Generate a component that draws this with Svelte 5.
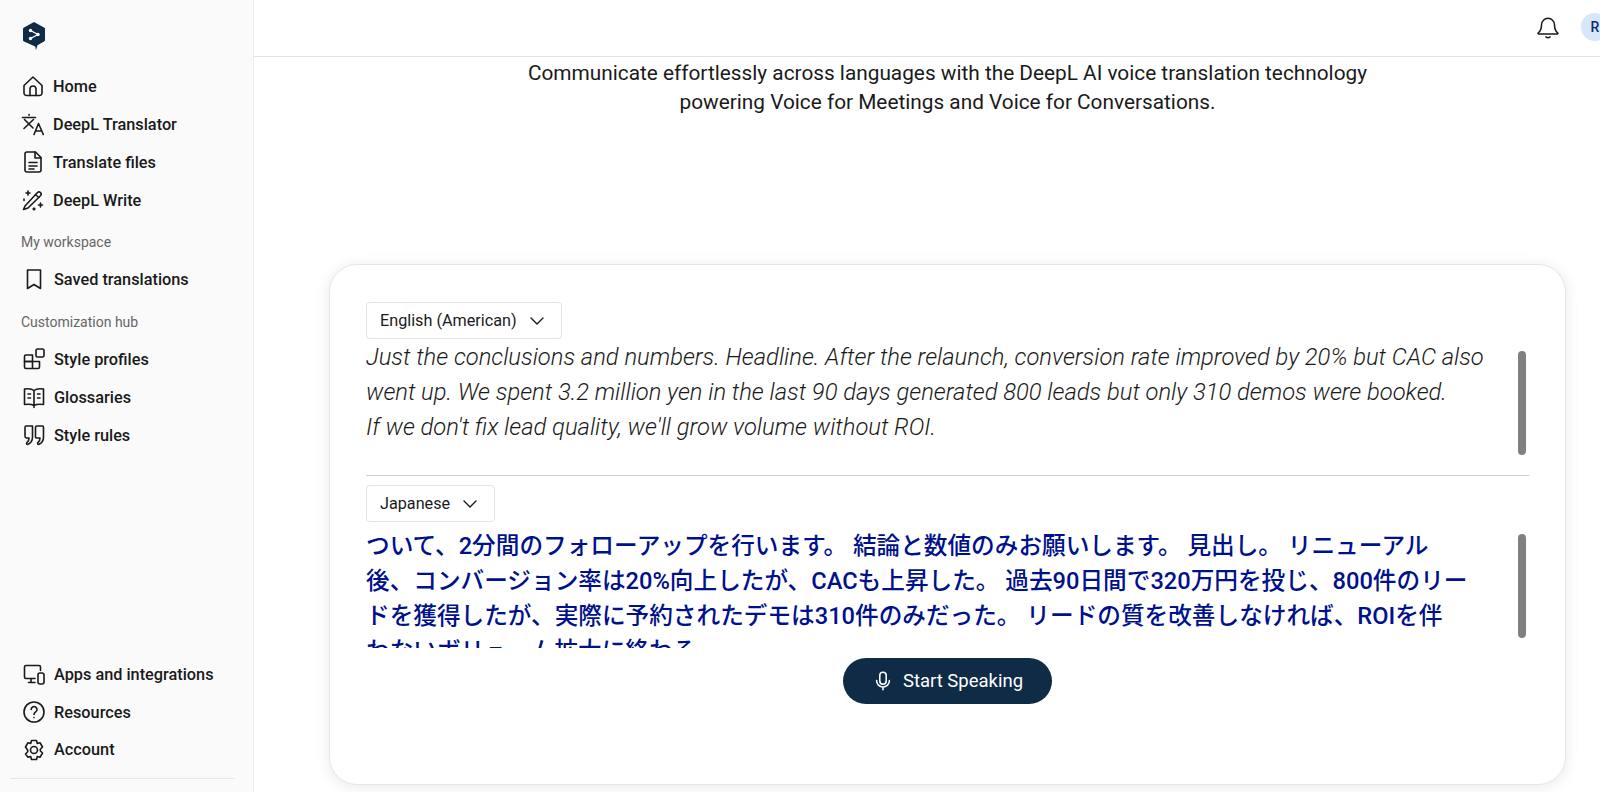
<script>
  const topNav = [
    { icon: 'home', label: 'Home' },
    { icon: 'translate', label: 'DeepL Translator' },
    { icon: 'file', label: 'Translate files' },
    { icon: 'wand', label: 'DeepL Write' }
  ];
  const hubNav = [
    { icon: 'profiles', label: 'Style profiles' },
    { icon: 'book', label: 'Glossaries' },
    { icon: 'quote', label: 'Style rules' }
  ];
  const bottomNav = [
    { icon: 'devices', label: 'Apps and integrations' },
    { icon: 'help', label: 'Resources' },
    { icon: 'gear', label: 'Account' }
  ];

  const sourceLines = [
    'Just the conclusions and numbers. Headline. After the relaunch, conversion rate improved by 20% but CAC also',
    'went up. We spent 3.2 million yen in the last 90 days generated 800 leads but only 310 demos were booked.',
    "If we don't fix lead quality, we'll grow volume without ROI."
  ];
  const targetLines = [
    'ついて、2分間のフォローアップを行います。 結論と数値のみお願いします。 見出し。 リニューアル',
    '後、コンバージョン率は20%向上したが、CACも上昇した。 過去90日間で320万円を投じ、800件のリー',
    'ドを獲得したが、実際に予約されたデモは310件のみだった。 リードの質を改善しなければ、ROIを伴',
    'わないボリューム拡大に終わる。'
  ];
</script>

{#snippet icon(name)}
  <svg class="icon" viewBox="0 0 24 24" fill="none" stroke="currentColor" stroke-width="1.6" stroke-linecap="round" stroke-linejoin="round">
    {#if name === 'home'}
      <path d="M3 11.500 12 3l9 8.500V19a2.500 2.500 0 0 1-2.500 2.500h-13A2.500 2.500 0 0 1 3 19z" />
      <path d="M9 21.500V15a3 3 0 0 1 6 0v6.500" />
    {:else if name === 'translate'}
      <path d="M1.500 5.500h13M8 2.500v.8M3.500 7.500 12 16M12.500 7.500 3 16.500" />
      <path d="m13 22.500 4.500-11 4.800 11M14.500 19h6" />
    {:else if name === 'file'}
      <path d="M6 2h8.500L20 7.500V20a2 2 0 0 1-2 2H6a2 2 0 0 1-2-2V4a2 2 0 0 1 2-2z" />
      <path d="M14 2v6h6M8 12.500h8M8 16h8M8 19h5" />
    {:else if name === 'wand'}
      <path d="M2.500 21.500 4 18 16.500 4.500a2.200 2.200 0 0 1 3.200 3L7 20z" />
      <path d="m14.500 6.500 3.200 3M7 3v4M5 5h4M19.500 15v4M17.500 17h4M13 20v2M12 21h2M3 11v1.500" />
    {:else if name === 'bookmark'}
      <path d="M5.500 3h13v18.500L12 17.500l-6.500 4z" />
    {:else if name === 'profiles'}
      <path d="M2.500 9.500A1.500 1.500 0 0 1 4 8h6.500v6.500h-8z" />
      <path d="M2.500 14.500h8v7H4A1.500 1.500 0 0 1 2.500 20zM10.500 14.500h7V20a1.500 1.500 0 0 1-1.500 1.500h-5.500z" />
      <rect x="14" y="2" width="8" height="8" rx="1.500" />
    {:else if name === 'book'}
      <path d="M12 5.500C10 3.800 6 3.500 2.500 4v15.500c3.500-.4 7.500-.2 9.500 1 2-1.200 6-1.400 9.500-1V4C18 3.500 14 3.800 12 5.500zM12 5.500v17" />
      <path d="M6 9h2.500M6 13h2.500M15.500 9H18M15.500 13H18" />
    {:else if name === 'quote'}
      <path d="M4 3h6.500v11c0 4-2 6.500-5 7.500-1.500-.5-1-2 0-2.500 1-1 1.500-2 1.500-4H4.500A2 2 0 0 1 3 13V4.500C3 3.500 3.300 3 4 3z" />
      <path d="M15 3h5.500c.8 0 1 .5 1 1.500V14c0 4-2 6.500-5 7.500-1.500-.5-1-2 0-2.500 1-1 1.500-2 1.500-4h-3A1.500 1.500 0 0 1 13.500 13V4.500C13.500 3.500 14 3 15 3z" />
    {:else if name === 'devices'}
      <path d="M13 16.500H4A1.500 1.500 0 0 1 2.500 15V5A1.500 1.500 0 0 1 4 3.500h13A1.500 1.500 0 0 1 18.500 5v3.500M9 16.500V20M6.500 20.500H13" />
      <rect x="16" y="11" width="6" height="11" rx="2" />
    {:else if name === 'help'}
      <circle cx="12" cy="12" r="10" />
      <path d="M9.200 9.500a2.900 2.900 0 1 1 4.500 2.400c-1 .7-1.700 1.300-1.700 2.600M12 17.500v.1" />
    {:else if name === 'gear'}
      <circle cx="12" cy="12" r="3.500" />
      <path d="M9.500 2.500h5l.8 3 2.700-.8 2.500 4.300-2.200 2.200v1.600l2.200 2.200-2.500 4.300-2.700-.8-.8 3h-5l-.8-3-2.700.8L3.500 16l2.200-2.200v-1.600L3.500 9 6 4.700l2.700.8z" />
    {/if}
  </svg>
{/snippet}

{#snippet navItem(item)}
  <a class="nav-item" href="#top">
    {@render icon(item.icon)}
    <span>{item.label}</span>
  </a>
{/snippet}

{#snippet chevron()}
  <svg class="chevron" viewBox="0 0 14 8" fill="none" stroke="currentColor" stroke-width="1.400" stroke-linecap="round" stroke-linejoin="round">
    <path d="m1 1 6 6 6-6" />
  </svg>
{/snippet}

<div class="page">
  <aside class="sidebar">
    <div class="logo">
      <svg viewBox="0 0 22 28" width="22" height="28">
        <path d="M11 0 21 5.500a1.500 1.500 0 0 1 1 1.300v11.400a1.500 1.500 0 0 1-1 1.300l-6.500 3.700-1.500 4.800-.8-3.500L1 19.500a1.500 1.500 0 0 1-1-1.300V6.800a1.500 1.500 0 0 1 1-1.300z" fill="#0f2b46" />
        <path d="M7.500 8.500 15 12.500 7.500 16.500" fill="none" stroke="#fff" stroke-width="1.300" />
        <circle cx="7.500" cy="8.500" r="1.700" fill="#fff" />
        <circle cx="15" cy="12.500" r="1.700" fill="#fff" />
        <circle cx="7.500" cy="16.500" r="1.700" fill="#fff" />
      </svg>
    </div>

    <nav class="nav-group">
      {#each topNav as item}
        {@render navItem(item)}
      {/each}
    </nav>

    <div class="section-label">My workspace</div>
    <nav class="nav-group shifted">
      {@render navItem({ icon: 'bookmark', label: 'Saved translations' })}
    </nav>

    <div class="section-label hub">Customization hub</div>
    <nav class="nav-group shifted">
      {#each hubNav as item}
        {@render navItem(item)}
      {/each}
    </nav>

    <nav class="nav-group shifted bottom">
      {#each bottomNav as item}
        {@render navItem(item)}
      {/each}
    </nav>
    <div class="sidebar-rule"></div>
  </aside>

  <div class="main">
    <header class="topbar">
      <svg class="bell" viewBox="0 0 24 24" fill="none" stroke="currentColor" stroke-width="1.400" stroke-linecap="round" stroke-linejoin="round">
        <path d="M6 10a6 6 0 0 1 12 0c0 4.500 1 6 3 7.500.5.500.2 1-.5 1h-17c-.7 0-1-.5-.5-1 2-1.500 3-3 3-7.500z" />
        <path d="M10 21.200q2 1.300 4 0" />
      </svg>
      <div class="avatar">R</div>
    </header>

    <p class="intro">
      Communicate effortlessly across languages with the DeepL AI voice translation technology<br />
      powering Voice for Meetings and Voice for Conversations.
    </p>

    <section class="card">
      <div class="pane source-pane">
        <button class="lang">English (American) {@render chevron()}</button>
        <div class="scroll-row source-row">
          <div class="source-text">
            {#each sourceLines as line}
              <div class="line">{line}</div>
            {/each}
          </div>
          <div class="scrollbar"></div>
        </div>
      </div>

      <div class="pane target-pane">
        <button class="lang">Japanese {@render chevron()}</button>
        <div class="scroll-row target-row">
          <div class="target-text">
            {#each targetLines as line}
              <div class="line">{line}</div>
            {/each}
          </div>
          <div class="scrollbar"></div>
        </div>
      </div>

      <button class="speak">
        <svg viewBox="0 0 24 24" width="22" height="22" fill="none" stroke="currentColor" stroke-width="1.700" stroke-linecap="round" stroke-linejoin="round">
          <rect x="8.500" y="2.500" width="7" height="13" rx="3.500" />
          <path d="M5 11.500a7 7 0 0 0 14 0M12 18.500v3" />
        </svg>
        Start Speaking
      </button>
    </section>
  </div>
</div>

<style>
  :global(body) {
    overflow: hidden;
    background: #fff;
  }

  .page {
    display: flex;
    width: 1600px;
    height: 792px;
    overflow: hidden;
    font-family: Roboto, "Noto Sans CJK JP", sans-serif;
    color: #1a1a1a;
  }

  .sidebar {
    display: flex;
    flex-direction: column;
    flex: none;
    box-sizing: border-box;
    width: 254px;
    height: 792px;
    padding-top: 22px;
    background: #fafafa;
    border-right: 1px solid #ececec;
  }

  .logo {
    height: 45px;
    padding-left: 23px;
  }

  .nav-group {
    display: flex;
    flex-direction: column;
    padding-left: 21px;
  }

  .nav-group.shifted {
    padding-left: 22px;
  }

  .nav-group.bottom {
    margin-top: auto;
  }

  .nav-group.bottom .nav-item:last-child {
    height: 37px;
  }

  .nav-item {
    display: flex;
    align-items: center;
    gap: 8px;
    height: 38px;
    color: #1a1a1a;
    font-size: 16.3px;
    font-weight: 500;
    text-decoration: none;
  }

  .icon {
    flex: none;
    width: 24px;
    height: 24px;
  }

  .section-label {
    display: flex;
    align-items: center;
    height: 22px;
    margin: 12px 0 7px;
    padding-left: 21px;
    color: #666;
    font-size: 14px;
  }

  .section-label.hub {
    margin-top: 13px;
  }

  .sidebar-rule {
    flex: none;
    height: 1px;
    margin: 10px 18px 13px 10px;
    background: #e6e6e6;
  }

  .main {
    display: flex;
    flex-direction: column;
    flex: 1;
    min-width: 0;
  }

  .topbar {
    display: flex;
    flex: none;
    align-items: center;
    justify-content: flex-end;
    gap: 20px;
    box-sizing: border-box;
    height: 57px;
    margin-right: -9px;
    padding-bottom: 3px;
    border-bottom: 1px solid #e3e3e3;
  }

  .bell {
    width: 26px;
    height: 26px;
    color: #1a1a1a;
  }

  .avatar {
    display: flex;
    align-items: center;
    justify-content: center;
    width: 28px;
    height: 28px;
    border-radius: 50%;
    background: #d6e6fb;
    color: #0f2b6e;
    font-size: 14px;
    font-weight: 500;
  }

  .intro {
    margin: 2px 35px 0 76px;
    color: #1a1a1a;
    font-size: 20.8px;
    line-height: 29px;
    text-align: center;
  }

  .card {
    display: flex;
    flex-direction: column;
    box-sizing: border-box;
    width: 1237px;
    height: 521px;
    margin: 147px 34px 0 75px;
    padding: 37px 36px 0;
    border: 1px solid #e6e6e6;
    border-radius: 28px;
    background: #fff;
    box-shadow: 0 2px 16px rgba(0, 0, 0, 0.09);
  }

  .pane {
    flex: none;
  }

  .source-pane {
    height: 173px;
    border-bottom: 1px solid #cfcfcf;
  }

  .target-pane {
    padding-top: 9px;
  }

  .lang {
    display: inline-flex;
    align-items: center;
    gap: 13px;
    box-sizing: border-box;
    height: 37px;
    padding: 0 17px 0 13px;
    border: 1px solid #e3e3e3;
    border-radius: 4px;
    background: #fff;
    color: #1a1a1a;
    font: 400 16.2px Roboto, sans-serif;
  }

  .chevron {
    width: 14px;
    height: 8px;
  }

  .scroll-row {
    display: flex;
    justify-content: space-between;
    overflow: hidden;
  }

  .source-row {
    height: 135px;
  }

  .target-row {
    height: 126px;
  }

  .line {
    line-height: 35px;
    white-space: nowrap;
  }

  .source-text {
    margin-top: 1px;
    color: #1a1a1a;
    font-size: 23.75px;
    font-style: italic;
    font-weight: 300;
  }

  .target-text {
    margin-top: 7px;
    color: #00118c;
    font-size: 23.65px;
    font-weight: 500;
  }

  .scrollbar {
    flex: none;
    width: 8px;
    height: 104px;
    margin: 12px 3px 0 0;
    border-radius: 4px;
    background: #808080;
  }

  .speak {
    display: flex;
    align-items: center;
    justify-content: center;
    gap: 9px;
    flex: none;
    align-self: center;
    width: 209px;
    height: 46px;
    margin-top: 10px;
    border: none;
    border-radius: 23px;
    background: #0f2b46;
    color: #fff;
    font: 400 18.5px Roboto, sans-serif;
  }
</style>
